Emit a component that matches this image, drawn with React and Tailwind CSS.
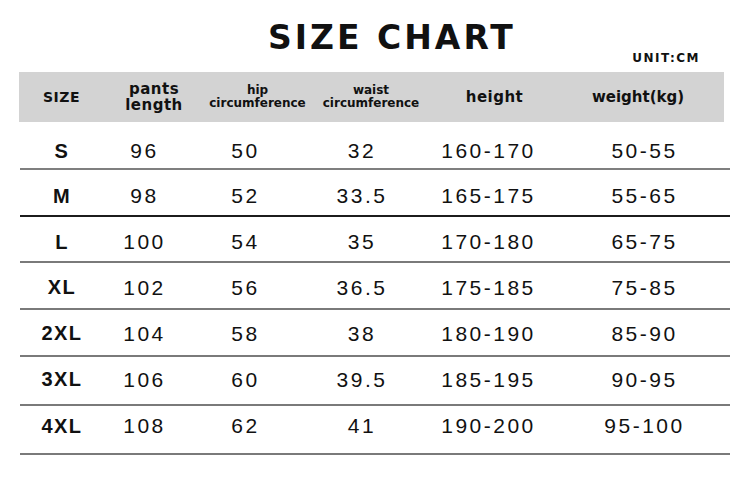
import React from 'react';

const rows = [
  { size: 'S', pants: '96', hip: '50', waist: '32', height: '160-170', weight: '50-55', cls: 'h-[48px] pt-[11px] border-[#7f7f7f]' },
  { size: 'M', pants: '98', hip: '52', waist: '33.5', height: '165-175', weight: '55-65', cls: 'h-[47px] pt-[6px] border-[#1c1c1c]' },
  { size: 'L', pants: '100', hip: '54', waist: '35', height: '170-180', weight: '65-75', cls: 'h-[46px] pt-[5px] border-[#7a7a7a]' },
  { size: 'XL', pants: '102', hip: '56', waist: '36.5', height: '175-185', weight: '75-85', cls: 'h-[47px] pt-[3px] border-[#7a7a7a]' },
  { size: '2XL', pants: '104', hip: '58', waist: '38', height: '180-190', weight: '85-90', cls: 'h-[47px] pt-[1px] border-[#7a7a7a]' },
  { size: '3XL', pants: '106', hip: '60', waist: '39.5', height: '185-195', weight: '90-95', cls: 'h-[49px] pb-[3px] border-[#7a7a7a]' },
  { size: '4XL', pants: '108', hip: '62', waist: '41', height: '190-200', weight: '95-100', cls: 'h-[49px] pb-[8px] border-[#7a7a7a]' },
];

const head = "font-['DejaVu_Sans',sans-serif] font-bold text-[#111]";
const num = "font-['Liberation_Sans',Arial,sans-serif] text-[21px] leading-none tracking-[2.5px] text-[#111] text-center";

export default function App() {
  return (
    <div className="w-[750px] h-[484px] bg-white overflow-hidden">
      <div className="flex items-end h-[72px]">
        <h1 className={`${head} pl-[268px] pb-[18px] text-[33px] leading-none tracking-[3px]`}>SIZE CHART</h1>
        <span className={`${head} ml-auto mr-[50px] pb-[8px] text-[12px] leading-none tracking-[1.5px]`}>UNIT:CM</span>
      </div>

      <div className={`${head} ml-[19px] w-[705px] h-[50px] bg-[#d3d3d3] grid grid-cols-[85px_100px_107px_120px_127px_166px] items-center text-center`}>
        <div className="text-[14px] tracking-[0.5px] leading-none">SIZE</div>
        <div className="text-[15px] leading-[16px] tracking-[0.5px]">pants<br />length</div>
        <div className="text-[12px] leading-[13px]">hip<br />circumference</div>
        <div className="text-[12px] leading-[13px]">waist<br />circumference</div>
        <div className="text-[15px] leading-none tracking-[0.5px]">height</div>
        <div className="text-[15px] leading-none pr-[6px]">weight(kg)</div>
      </div>

      <div className="ml-[20px] w-[710px]">
        {rows.map((r) => (
          <div key={r.size} className={`grid grid-cols-[84px_81px_121px_112px_141px_171px] items-center border-b-2 ${r.cls}`}>
            <div className="font-['Liberation_Sans',Arial,sans-serif] font-bold text-[20px] leading-none tracking-[1.5px] text-[#111] text-center">{r.size}</div>
            <div className={num}>{r.pants}</div>
            <div className={num}>{r.hip}</div>
            <div className={num}>{r.waist}</div>
            <div className={num}>{r.height}</div>
            <div className={num}>{r.weight}</div>
          </div>
        ))}
      </div>
    </div>
  );
}
